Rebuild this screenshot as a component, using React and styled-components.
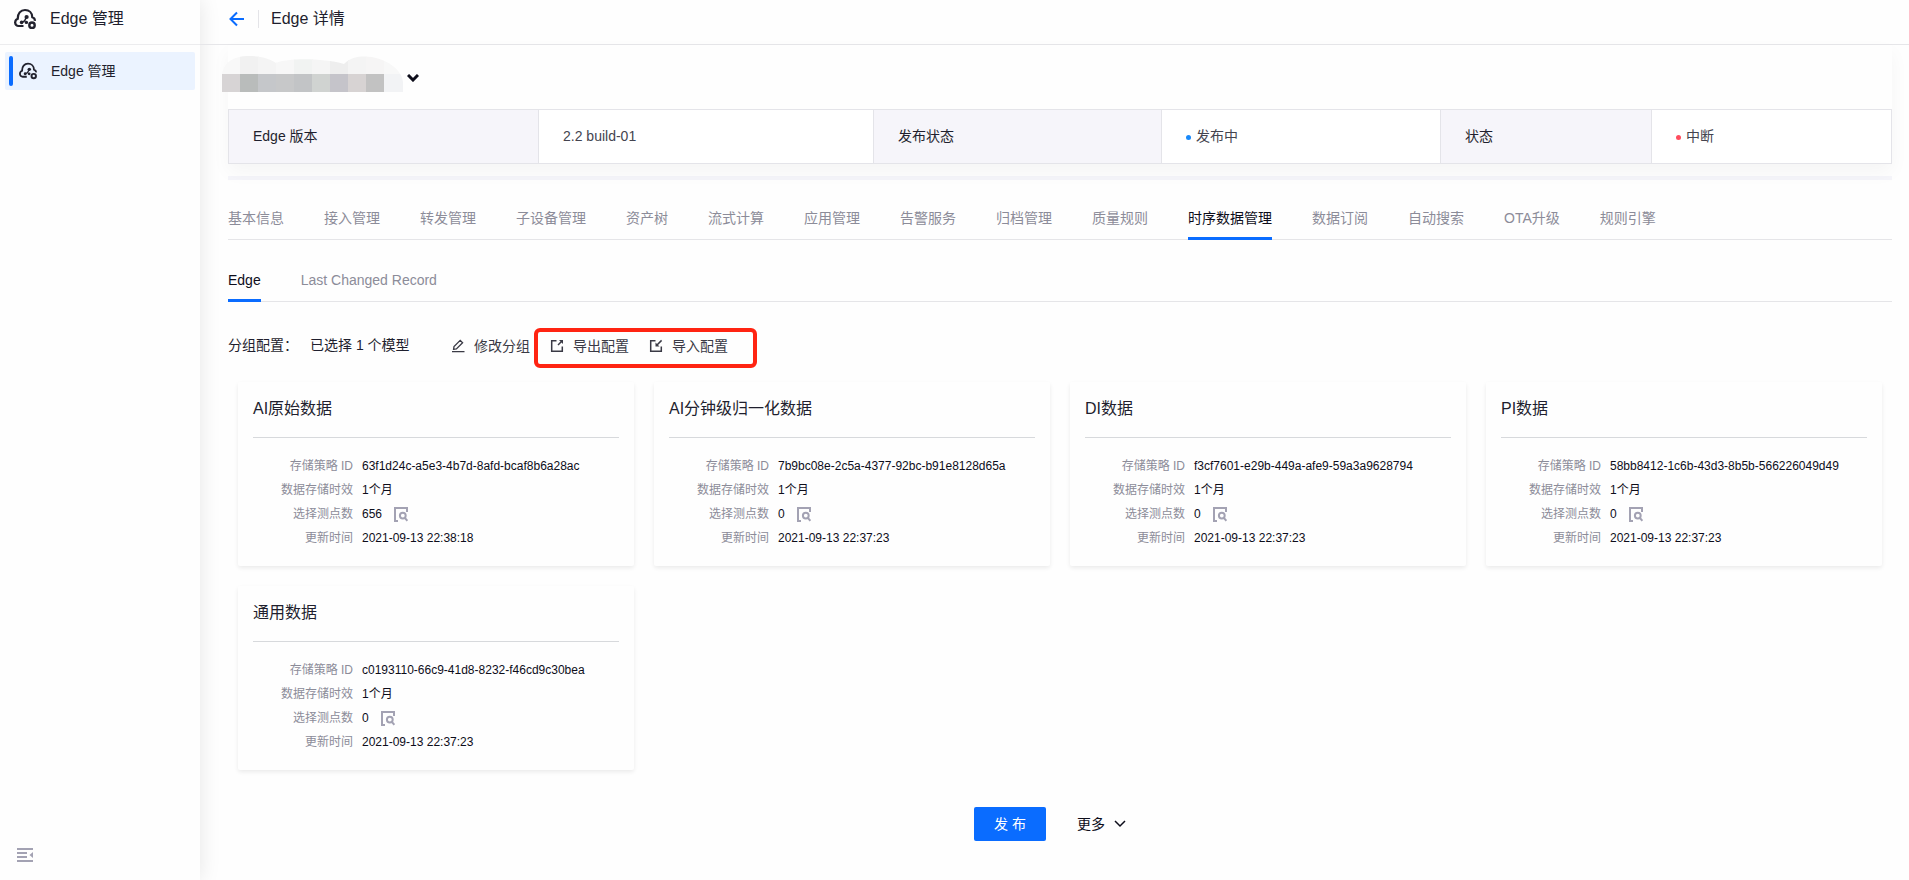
import React, { useState } from "react";
import styled, { createGlobalStyle } from "styled-components";

const GlobalStyle = createGlobalStyle`
  * {
    box-sizing: border-box;
  }
  body {
    margin: 0;
    background: #fefefe;
    color: #1f1f2e;
    font-family: "Liberation Sans", "Noto Sans CJK SC", sans-serif;
    font-size: 14px;
    line-height: 22px;
  }
  button {
    padding: 0;
    border: 0;
    background: none;
    color: inherit;
    font: inherit;
    cursor: pointer;
  }
  a {
    color: inherit;
    text-decoration: none;
  }
  svg {
    display: block;
    flex: none;
  }
`;

const Layout = styled.div`
  display: flex;
  min-height: 100vh;
`;

const Sidebar = styled.aside`
  display: flex;
  flex-direction: column;
  flex: none;
  width: 200px;
  background: #fefefe;
  box-shadow: 0 0 20px rgba(0, 0, 0, 0.1);
`;

const SidebarTitle = styled.div`
  display: flex;
  align-items: center;
  gap: 14px;
  height: 45px;
  padding: 0 14px 6px;
  border-bottom: 1px solid #ececee;
  font-size: 16px;
`;

const MenuItem = styled.a`
  display: flex;
  align-items: center;
  height: 38px;
  margin: 7px 5px;
  padding-left: 4px;
  border-radius: 2px;
  background: #ebf3ff;

  svg {
    margin: 0 14px 0 6px;
  }
`;

const MenuMark = styled.span`
  width: 4px;
  height: 30px;
  border-radius: 2px;
  background: #0a6cff;
`;

const CollapseButton = styled.button`
  width: 16px;
  margin: auto 0 18px 17px;
`;

const Main = styled.main`
  flex: 1;
  min-width: 0;
`;

const Header = styled.header`
  display: flex;
  align-items: center;
  height: 45px;
  padding: 0 28px 6px;
  border-bottom: 1px solid #e6e6e9;
`;

const HeaderTitle = styled.h1`
  margin: 0 0 0 14px;
  padding-left: 12px;
  border-left: 1px solid #e4e4e8;
  font-size: 16px;
  font-weight: 400;
  line-height: 18px;
`;

const Content = styled.div`
  padding: 0 17px 38px 28px;
`;

const Summary = styled.section`
  border-bottom: 4px solid #f5f5fa;
  padding-bottom: 12px;
`;

const SummaryBox = styled.div`
  padding-top: 11px;
  box-shadow: 0 8px 18px rgba(0, 0, 0, 0.04);
`;

const DeviceSelect = styled.button`
  display: flex;
  align-items: center;
  gap: 4px;
  height: 53px;
  margin-left: -6px;
  padding-bottom: 17px;

  svg:last-child {
    margin-top: 8px;
  }
`;

const InfoTable = styled.table`
  width: 100%;
  table-layout: fixed;
  border-collapse: collapse;
  background: #fff;

  th,
  td {
    height: 54px;
    padding: 0 24px 2px;
    border: 1px solid #e4e4e9;
    text-align: left;
    font-weight: 400;
  }
  th {
    background: #f6f5fa;
  }
  td {
    color: #44444f;
  }
`;

const Dot = styled.span`
  display: inline-block;
  width: 5px;
  height: 5px;
  margin-right: 5px;
  border-radius: 50%;
  background: ${props => props.$color};
  vertical-align: 1px;
`;

const Tabs = styled.nav`
  display: flex;
  gap: 40px;
  margin-top: ${props => props.$top}px;
  border-bottom: 1px solid #e5e5e8;
`;

const Tab = styled.button`
  height: 38px;
  margin-bottom: -1px;
  padding-bottom: 4px;
  border-bottom: 3px solid ${props => (props.$active ? "#0a6cff" : "transparent")};
  color: ${props => (props.$active ? "#0d0d1a" : "#8c8c99")};
  white-space: nowrap;
`;

const ConfigRow = styled.div`
  display: flex;
  align-items: center;
  margin-top: 26px;
  height: 40px;
  white-space: nowrap;
`;

const ConfigLabel = styled.span`
  width: 82px;
  padding-bottom: 6px;
`;

const ConfigValue = styled.span`
  width: 141px;
  padding-bottom: 6px;
`;

const IconButton = styled.button`
  display: flex;
  align-items: center;
  gap: 9px;
  padding-bottom: 4px;
  color: #3a3a45;
`;

const Highlight = styled.div`
  display: flex;
  align-items: center;
  gap: 20px;
  height: 40px;
  margin-left: 4px;
  padding: 0 25px 0 12px;
  border: 4px solid #ff2412;
  border-radius: 6px;
`;

const Cards = styled.div`
  display: grid;
  grid-template-columns: repeat(4, 1fr);
  gap: 20px;
  padding: 14px 10px 0;
`;

const Card = styled.article`
  height: 184px;
  padding: 14px 15px;
  border-radius: 2px;
  box-shadow: 0 2px 4px rgba(0, 0, 0, 0.08);
`;

const CardTitle = styled.h2`
  margin: 0 0 16px;
  padding-bottom: 16px;
  border-bottom: 1px solid #d7d9dc;
  font-size: 16px;
  font-weight: 400;
  line-height: 25px;
`;

const Fields = styled.dl`
  display: grid;
  grid-template-columns: 100px 1fr;
  column-gap: 9px;
  margin: 0;
  font-size: 12px;
  line-height: 24px;

  dt {
    color: #8c8c99;
    text-align: right;
  }
  dd {
    display: flex;
    align-items: center;
    gap: 12px;
    margin: 0;
    color: #0d0d1a;
    white-space: nowrap;
  }
`;

const Footer = styled.footer`
  display: flex;
  justify-content: center;
  align-items: center;
  gap: 31px;
  margin-top: 37px;
  padding-right: 20px;
`;

const PublishButton = styled.button`
  width: 72px;
  height: 34px;
  border-radius: 2px;
  background: #0a6cff;
  color: #fff;
`;

const MoreButton = styled.button`
  display: flex;
  align-items: center;
  gap: 9px;
  color: #0d0d1a;
`;

function EdgeIcon({ size }) {
  return (
    <svg width={size} height={size} viewBox="0 0 22 22" fill="none" stroke="#22222e" strokeWidth="2.2">
      <path d="M9.5 18H4.6A3.4 3.4 0 0 1 1.2 14.4C1.2 12.6 2.2 11.2 3.8 10.7C3.6 5.4 6.6 2 11 2C15.2 2 18.2 5 18.3 9.2C20 9.8 21 11.2 20.8 12.8" />
      <path d="M7 15L10.5 13L12.5 9" strokeWidth="1.6" />
      <circle cx="7.6" cy="14.4" r="1.8" fill="#22222e" stroke="none" />
      <circle cx="12.6" cy="9" r="2.1" fill="#22222e" stroke="none" />
      <circle cx="12.4" cy="14.4" r="1.7" fill="#22222e" stroke="none" />
      <circle cx="18" cy="17.2" r="2.7" strokeWidth="2.4" />
    </svg>
  );
}

function BackIcon() {
  return (
    <svg width="16" height="16" viewBox="0 0 16 16" fill="none" stroke="#0a6cff" strokeWidth="2">
      <path d="M16 8H2.5M9 1.5L2.5 8L9 14.5" />
    </svg>
  );
}

function CollapseIcon() {
  return (
    <svg width="16" height="14" viewBox="0 0 16 14" fill="#a3a2b3">
      <path d="M0 0H16V2H0ZM0 4H10V6H0ZM0 8H10V10H0ZM0 12H16V14H0ZM16 4V10L12.5 7Z" />
    </svg>
  );
}

function ChevronIcon({ width = 2, color = "#0d0d1a" }) {
  return (
    <svg width="12" height="8" viewBox="0 0 12 8" fill="none" stroke={color} strokeWidth={width}>
      <path d="M1 1L6 6L11 1" />
    </svg>
  );
}

function EditIcon() {
  return (
    <svg width="14" height="14" viewBox="0 0 14 14" fill="none" stroke="#3a3a45" strokeWidth="1.3">
      <path d="M1 12.6H13.5M2.6 10.2L3 7.5L9.2 1.3L11.6 3.7L5.4 9.9ZM2.4 10.4L5.4 9.9" />
    </svg>
  );
}

function ExportIcon() {
  return (
    <svg width="14" height="14" viewBox="0 0 14 14" fill="none" stroke="#3a3a45" strokeWidth="1.5">
      <path d="M6.5 1.7H1.7V12.3H12.3V7.5M8 6L12 2" />
      <path d="M9 1H13V5Z" fill="#3a3a45" stroke="none" />
    </svg>
  );
}

function ImportIcon() {
  return (
    <svg width="14" height="14" viewBox="0 0 14 14" fill="none" stroke="#3a3a45" strokeWidth="1.5">
      <path d="M6.5 1.7H1.7V12.3H12.3V7.5M12.6 1.4L8 6" />
      <path d="M6.5 3.5V7.5H10.5Z" fill="#3a3a45" stroke="none" />
    </svg>
  );
}

function DetailIcon() {
  return (
    <svg width="14" height="15" viewBox="0 0 14 15" fill="none" stroke="#a3a2b3" strokeWidth="2">
      <path d="M4 14H1V1H13V5" />
      <circle cx="8.8" cy="8.6" r="2.9" />
      <path d="M10.8 10.8L13.4 13.8" />
    </svg>
  );
}

const maskTop = ["#f8f8f8", "#f1f1f1", "#f4f4f4", "#f7f7f7", "#f1f3f2", "#f5f5f5", "#eeeeee", "#f4f4f4", "#f6f5f5", "#f8f8f8"];
const maskBottom = ["#d7d4d5", "#b9bcbb", "#c5c7ca", "#c7c8c9", "#c2c4c6", "#d0d3d1", "#c5c4ca", "#d7d3d3", "#c2c2c2", "#f2f3f5"];

// the device name is hidden behind a mosaic
function MaskedName() {
  return (
    <svg width="181" height="36" viewBox="0 0 181 36" shapeRendering="crispEdges">
      <clipPath id="mask">
        <path d="M0 18C2 6 12 0 26 0C38 0 46 2 54 7C66 2 100 2 122 8C130 0 140 0 150 1C166 4 180 14 181 26V36H0Z" />
      </clipPath>
      <g clipPath="url(#mask)">
        {maskTop.map((color, i) => <rect key={i} x={i * 18} y="0" width="19" height="18" fill={color} />)}
        {maskBottom.map((color, i) => <rect key={i} x={i * 18} y="18" width="19" height="18" fill={color} />)}
      </g>
    </svg>
  );
}

const tabs = [
  "基本信息", "接入管理", "转发管理", "子设备管理", "资产树", "流式计算", "应用管理", "告警服务",
  "归档管理", "质量规则", "时序数据管理", "数据订阅", "自动搜索", "OTA升级", "规则引擎",
];

const groups = [
  { title: "AI原始数据", id: "63f1d24c-a5e3-4b7d-8afd-bcaf8b6a28ac", points: 656, updated: "2021-09-13 22:38:18" },
  { title: "AI分钟级归一化数据", id: "7b9bc08e-2c5a-4377-92bc-b91e8128d65a", points: 0, updated: "2021-09-13 22:37:23" },
  { title: "DI数据", id: "f3cf7601-e29b-449a-afe9-59a3a9628794", points: 0, updated: "2021-09-13 22:37:23" },
  { title: "PI数据", id: "58bb8412-1c6b-43d3-8b5b-566226049d49", points: 0, updated: "2021-09-13 22:37:23" },
  { title: "通用数据", id: "c0193110-66c9-41d8-8232-f46cd9c30bea", points: 0, updated: "2021-09-13 22:37:23" },
];

function GroupCard({ title, id, points, updated }) {
  return (
    <Card>
      <CardTitle>{title}</CardTitle>
      <Fields>
        <dt>存储策略 ID</dt>
        <dd>{id}</dd>
        <dt>数据存储时效</dt>
        <dd>1个月</dd>
        <dt>选择测点数</dt>
        <dd>
          {points}
          <button aria-label="查看测点"><DetailIcon /></button>
        </dd>
        <dt>更新时间</dt>
        <dd>{updated}</dd>
      </Fields>
    </Card>
  );
}

export default function App() {
  const [tab, setTab] = useState("时序数据管理");
  const [subTab, setSubTab] = useState("Edge");

  return (
    <Layout>
      <GlobalStyle />
      <Sidebar>
        <SidebarTitle>
          <EdgeIcon size={22} />
          Edge 管理
        </SidebarTitle>
        <MenuItem href="#edge">
          <MenuMark />
          <EdgeIcon size={18} />
          Edge 管理
        </MenuItem>
        <CollapseButton aria-label="收起菜单"><CollapseIcon /></CollapseButton>
      </Sidebar>
      <Main>
        <Header>
          <a href="#back" aria-label="返回"><BackIcon /></a>
          <HeaderTitle>Edge 详情</HeaderTitle>
        </Header>
        <Content>
          <Summary>
            <SummaryBox>
              <DeviceSelect aria-label="切换设备">
                <MaskedName />
                <ChevronIcon width={3} />
              </DeviceSelect>
              <InfoTable>
                <colgroup>
                  <col width="310" />
                  <col width="335" />
                  <col width="288" />
                  <col width="279" />
                  <col width="211" />
                  <col />
                </colgroup>
                <tbody>
                  <tr>
                    <th scope="row">Edge 版本</th>
                    <td>2.2 build-01</td>
                    <th scope="row">发布状态</th>
                    <td><Dot $color="#1989fa" />发布中</td>
                    <th scope="row">状态</th>
                    <td><Dot $color="#ff4d5e" />中断</td>
                  </tr>
                </tbody>
              </InfoTable>
            </SummaryBox>
          </Summary>

          <Tabs $top={22}>
            {tabs.map(name => (
              <Tab key={name} $active={name === tab} onClick={() => setTab(name)}>{name}</Tab>
            ))}
          </Tabs>
          <Tabs $top={24}>
            {["Edge", "Last Changed Record"].map(name => (
              <Tab key={name} $active={name === subTab} onClick={() => setSubTab(name)}>{name}</Tab>
            ))}
          </Tabs>

          <ConfigRow>
            <ConfigLabel>分组配置：</ConfigLabel>
            <ConfigValue>已选择 1 个模型</ConfigValue>
            <IconButton><EditIcon />修改分组</IconButton>
            <Highlight>
              <IconButton><ExportIcon />导出配置</IconButton>
              <IconButton><ImportIcon />导入配置</IconButton>
            </Highlight>
          </ConfigRow>

          <Cards>
            {groups.map(group => <GroupCard key={group.id} {...group} />)}
          </Cards>

          <Footer>
            <PublishButton>发 布</PublishButton>
            <MoreButton>更多<ChevronIcon width={1.5} /></MoreButton>
          </Footer>
        </Content>
      </Main>
    </Layout>
  );
}
